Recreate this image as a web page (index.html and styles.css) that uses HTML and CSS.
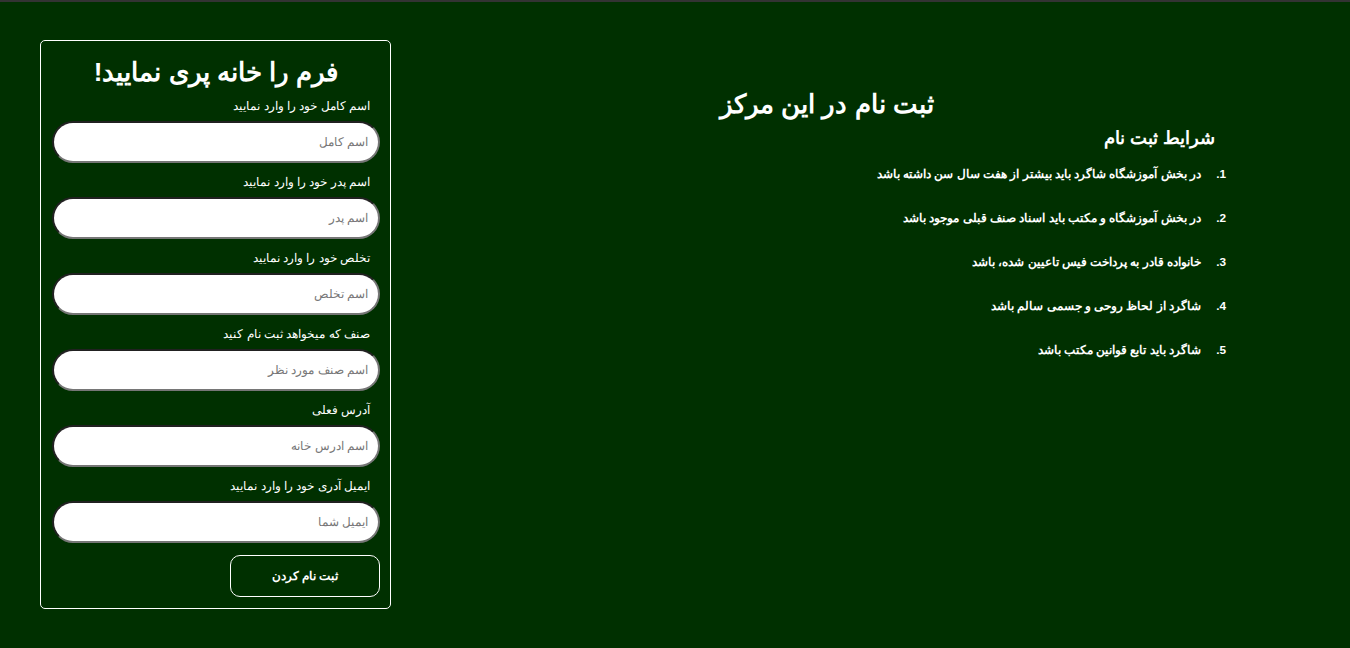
FILE: index.html
```html
<!DOCTYPE html>
<html lang="fa">
<head>
<meta charset="utf-8">
<title>ثبت نام</title>
<link rel="stylesheet" href="styles.css">
</head>
<body>
<div class="page">
  <form class="reg-form">
    <h2 class="form-title">فرم را خانه پری نمایید!</h2>
    <label class="field-label">اسم کامل خود را وارد نمایید</label>
    <input class="field" type="text" placeholder="اسم کامل">
    <label class="field-label">اسم پدر خود را وارد نمایید</label>
    <input class="field" type="text" placeholder="اسم پدر">
    <label class="field-label">تخلص خود را وارد نمایید</label>
    <input class="field" type="text" placeholder="اسم تخلص">
    <label class="field-label">صنف که میخواهد ثبت نام کنید</label>
    <input class="field" type="text" placeholder="اسم صنف مورد نظر">
    <label class="field-label">آدرس فعلی</label>
    <input class="field" type="text" placeholder="اسم ادرس خانه">
    <label class="field-label">ایمیل آدری خود را وارد نمایید</label>
    <input class="field" type="text" placeholder="ایمیل شما">
    <div class="actions">
      <button class="submit" type="button">ثبت نام کردن</button>
    </div>
  </form>
  <section class="info">
    <h1 class="info-title">ثبت نام در این مرکز</h1>
    <h2 class="info-sub">شرایط ثبت نام</h2>
    <ol class="rules">
      <li>در بخش آموزشگاه شاگرد باید بیشتر از هفت سال سن داشته باشد</li>
      <li>در بخش آموزشگاه و مکتب باید اسناد صنف قبلی موجود باشد</li>
      <li>خانواده قادر به پرداخت فیس تاعیین شده، باشد</li>
      <li>شاگرد از لحاظ روحی و جسمی سالم باشد</li>
      <li>شاگرد باید تابع قوانین مکتب باشد</li>
    </ol>
  </section>
</div>
</body>
</html>
```
FILE: styles.css
```css
html, body {
  margin: 0;
  padding: 0;
}
body {
  background: #003000;
  border-top: 2px solid #333;
  color: #fff;
  font-family: "Liberation Sans", sans-serif;
  height: 646px;
  overflow: hidden;
}
.page {
  display: flex;
  align-items: flex-start;
  padding: 38px 0 0 40px;
}
.reg-form {
  width: 351px;
  box-sizing: border-box;
  height: 569px;
  border: 1px solid #fff;
  border-radius: 5px;
  padding: 0 10px 0 11px;
  display: flex;
  flex-direction: column;
  direction: rtl;
}
.form-title {
  margin: 15px 0 0;
  text-align: center;
  font-size: 26px;
  line-height: 32px;
  font-weight: bold;
}
.field-label {
  font-size: 12px;
  line-height: 16px;
  margin: 11px 10px 7px 0;
  display: block;
}
.form-title + .field-label {
  margin-top: 10px;
}
.field {
  height: 42px;
  box-sizing: border-box;
  border: 2px inset #767676;
  border-radius: 21px;
  background: #fff;
  padding: 0 10px;
  font-family: inherit;
  font-size: 12px;
  direction: rtl;
  outline: none;
}
.field::placeholder {
  color: #777;
}
.actions {
  display: flex;
  margin-top: 12px;
}
.submit {
  width: 150px;
  height: 42px;
  background: transparent;
  color: #fff;
  border: 1px solid #fff;
  border-radius: 10px;
  font-family: inherit;
  font-size: 12px;
  font-weight: bold;
}
.info {
  width: 832px;
  margin-left: 20px;
  direction: rtl;
}
.info-title {
  text-align: center;
  font-size: 25.5px;
  line-height: 32px;
  margin: 48px 0 0;
}
.info-sub {
  font-size: 18px;
  line-height: 24px;
  margin: 6px 28px 0 0;
}
.rules {
  margin: 16px 0 0;
  padding: 0 30px 0 0;
  font-size: 11.8px;
  font-weight: bold;
}
.rules li {
  line-height: 16px;
  margin-bottom: 28px;
  padding-right: 12px;
}
```
